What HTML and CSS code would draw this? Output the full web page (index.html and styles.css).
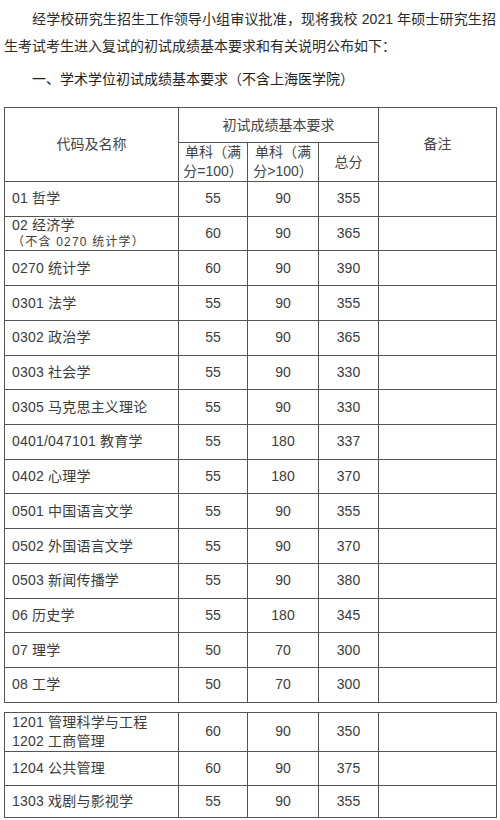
FILE: index.html
```html
<!DOCTYPE html>
<html lang="zh-CN">
<head>
<meta charset="utf-8">
<title>初试成绩基本要求</title>
<link rel="stylesheet" href="styles.css">
</head>
<body>
<div class="page">
  <p class="intro">经学校研究生招生工作领导小组审议批准，现将我校 2021 年硕士研究生招生考试考生进入复试的初试成绩基本要求和有关说明公布如下：</p>
  <h2 class="heading">一、学术学位初试成绩基本要求（不含上海医学院）</h2>

  <table class="grid">
    <colgroup>
      <col class="c-name"><col class="c-s1"><col class="c-s2"><col class="c-tot"><col class="c-note">
    </colgroup>
    <thead>
      <tr class="h1">
        <th rowspan="2">代码及名称</th>
        <th colspan="3">初试成绩基本要求</th>
        <th rowspan="2">备注</th>
      </tr>
      <tr class="h2">
        <th class="two">单科（满分=100）</th>
        <th class="two">单科（满分&gt;100）</th>
        <th>总分</th>
      </tr>
    </thead>
    <tbody>
      <tr class="r"><td class="name">01 哲学</td><td>55</td><td>90</td><td>355</td><td></td></tr>
      <tr class="r"><td class="name stack">02 经济学<br><span class="sub">（不含 0270 统计学）</span></td><td>60</td><td>90</td><td>365</td><td></td></tr>
      <tr class="r"><td class="name">0270 统计学</td><td>60</td><td>90</td><td>390</td><td></td></tr>
      <tr class="r"><td class="name">0301 法学</td><td>55</td><td>90</td><td>355</td><td></td></tr>
      <tr class="r"><td class="name">0302 政治学</td><td>55</td><td>90</td><td>365</td><td></td></tr>
      <tr class="r"><td class="name">0303 社会学</td><td>55</td><td>90</td><td>330</td><td></td></tr>
      <tr class="r"><td class="name">0305 马克思主义理论</td><td>55</td><td>90</td><td>330</td><td></td></tr>
      <tr class="r"><td class="name">0401/047101 教育学</td><td>55</td><td>180</td><td>337</td><td></td></tr>
      <tr class="r"><td class="name">0402 心理学</td><td>55</td><td>180</td><td>370</td><td></td></tr>
      <tr class="r"><td class="name">0501 中国语言文学</td><td>55</td><td>90</td><td>355</td><td></td></tr>
      <tr class="r"><td class="name">0502 外国语言文学</td><td>55</td><td>90</td><td>370</td><td></td></tr>
      <tr class="r"><td class="name">0503 新闻传播学</td><td>55</td><td>90</td><td>380</td><td></td></tr>
      <tr class="r"><td class="name">06 历史学</td><td>55</td><td>180</td><td>345</td><td></td></tr>
      <tr class="r"><td class="name">07 理学</td><td>50</td><td>70</td><td>300</td><td></td></tr>
      <tr class="r"><td class="name">08 工学</td><td>50</td><td>70</td><td>300</td><td></td></tr>
    </tbody>
  </table>

  <table class="grid second">
    <colgroup>
      <col class="c-name"><col class="c-s1"><col class="c-s2"><col class="c-tot"><col class="c-note">
    </colgroup>
    <tbody>
      <tr class="ra"><td class="name two">1201 管理科学与工程<br>1202 工商管理</td><td>60</td><td>90</td><td>350</td><td></td></tr>
      <tr class="rb"><td class="name">1204 公共管理</td><td>60</td><td>90</td><td>375</td><td></td></tr>
      <tr class="rc"><td class="name">1303 戏剧与影视学</td><td>55</td><td>90</td><td>355</td><td></td></tr>
    </tbody>
  </table>
</div>
</body>
</html>
```
FILE: styles.css
```css
html, body {
  margin: 0;
  padding: 0;
  background: #ffffff;
}

.page {
  width: 492px;
  padding: 6px 4px 0;
  font-family: "Liberation Sans", "Noto Sans CJK SC", sans-serif;
  color: #2b2b2b;
  font-size: 14px;
}

.intro {
  margin: 0;
  line-height: 27px;
  text-indent: 28px;
  text-align: justify;
  color: #2a2a2a;
}

.heading {
  margin: 6px 0 0;
  padding-left: 28px;
  font-size: 14px;
  font-weight: normal;
  line-height: 27px;
  color: #1f1f1f;
}

.grid {
  width: 492px;
  table-layout: fixed;
  border-collapse: collapse;
  margin-top: 14px;
  color: #3c3c3c;
}

.grid.second {
  margin-top: 9px;
}

.c-name { width: 174px; }
.c-s1 { width: 69px; }
.c-s2 { width: 71px; }
.c-tot { width: 60px; }
.c-note { width: 118px; }

.grid th,
.grid td {
  border: 1px solid #555555;
  padding: 0 4px;
  text-align: center;
  vertical-align: middle;
  font-weight: normal;
  line-height: 19px;
}

.grid th {
  color: #444444;
}

.grid .h1 { height: 35px; }
.grid .h2 { height: 38px; }
.grid .r { height: 34.73px; }
.grid .ra { height: 38px; }
.grid .rb { height: 34px; }
.grid .rc { height: 32px; }

.grid td.name {
  text-align: left;
  padding-left: 7px;
  letter-spacing: 0.2px;
}

.grid td.stack {
  line-height: 16px;
}

.sub {
  font-size: 12px;
  letter-spacing: 1.2px;
}
```
